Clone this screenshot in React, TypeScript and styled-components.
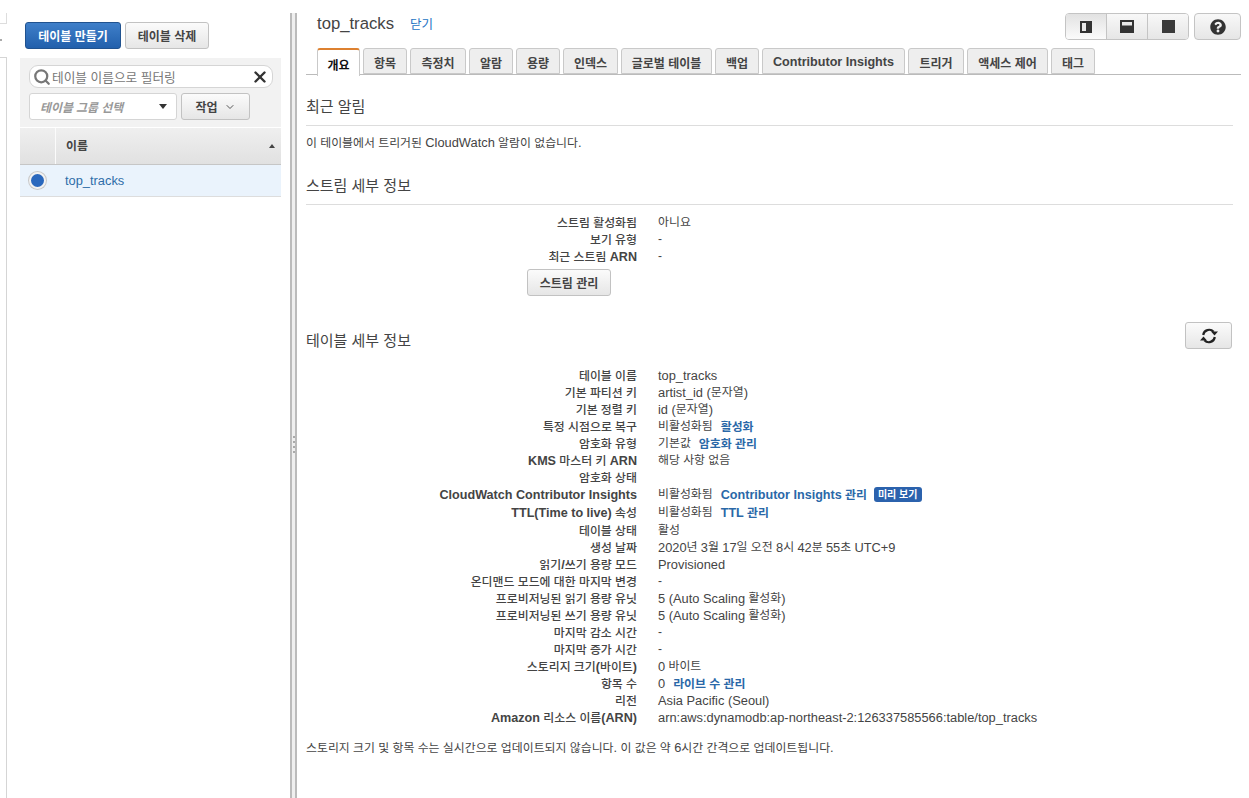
import React from "react";
import styled, { createGlobalStyle } from "styled-components";
import { ChevronDown, Search, X } from "lucide-react";
import { FaQuestionCircle } from "react-icons/fa";

const GlobalStyle = createGlobalStyle`
  html, body { margin: 0; padding: 0; background: #fff; }
  body {
    font-family: "Liberation Sans", "Noto Sans CJK KR", sans-serif;
    font-size: 11.9px;
    color: #444;
    overflow: hidden;
  }
  * { box-sizing: border-box; }
`;

const Page = styled.div`
  display: flex;
  width: 1249px;
  height: 798px;
  overflow: hidden;
`;

const Rail = styled.div`
  width: 7px;
  flex: none;
  display: flex;
  flex-direction: column;
  padding-top: 13px;
`;

const RailTop = styled.div`
  height: 11px;
  border-right: 1px solid #ddd;
  border-bottom: 1px solid #ddd;
`;

const RailDot = styled.div`
  width: 2px;
  height: 2px;
  margin-top: 15px;
  background: #aaa;
`;

const RailBottom = styled.div`
  flex: 1;
  margin-top: 16px;
  border-top: 1px solid #d5d5d5;
  border-right: 1px solid #d5d5d5;
`;

const LeftPane = styled.div`
  width: 261px;
  margin-left: 13px;
  flex: none;
`;

const ButtonBar = styled.div`
  display: flex;
  gap: 4px;
  padding: 22px 0 9px 5px;
`;

const Button = styled.button<{ $primary?: boolean; $w?: number }>`
  height: 27px;
  width: ${(p) => (p.$w ? `${p.$w}px` : "auto")};
  padding: 0;
  border-radius: 3px;
  font-family: inherit;
  font-size: 12px;
  font-weight: 700;
  display: inline-flex;
  align-items: center;
  justify-content: center;
  gap: 6px;
  color: ${(p) => (p.$primary ? "#fff" : "#444")};
  border: 1px solid ${(p) => (p.$primary ? "#20528f" : "#c2c2c2")};
  background: ${(p) =>
    p.$primary ? "linear-gradient(#3f7fc9, #2260ac)" : "linear-gradient(#fbfbfb, #e6e6e6)"};
`;

const FilterBox = styled.div`
  background: #f2f2f2;
  padding: 7px 8px 6px 9px;
  height: 69px;
`;

const SearchField = styled.div`
  height: 23px;
  width: 244px;
  display: flex;
  align-items: center;
  padding: 0 3px 0 3px;
  background: #fff;
  border: 1px solid #d5d5d5;
  border-radius: 9px;
  font-size: 12.7px;
  color: #777;
`;

const SearchText = styled.span`
  flex: 1;
  margin-left: 1px;
`;

const FilterRow = styled.div`
  display: flex;
  gap: 4px;
  margin-top: 5px;
`;

const GroupSelect = styled.div`
  width: 148px;
  height: 27px;
  display: flex;
  align-items: center;
  justify-content: space-between;
  padding: 0 9px 0 10px;
  background: #fff;
  border: 1px solid #d5d5d5;
  border-radius: 3px;
  font-style: italic;
  font-weight: 700;
  color: #999;
`;

const Caret = styled.span`
  width: 0;
  height: 0;
  border-left: 4.5px solid transparent;
  border-right: 4.5px solid transparent;
  border-top: 5px solid #333;
`;

const TableHead = styled.div`
  display: flex;
  height: 38px;
  padding-bottom: 4px;
  border-top: 1px solid #fff;
  border-bottom: 1px solid #c6c6c6;
  background: linear-gradient(#efefef, #e1e1e1);
`;

const SelectCol = styled.div`
  width: 36px;
  margin-bottom: -4px;
  border-right: 1px solid #fbfbfb;
`;

const NameCol = styled.div`
  flex: 1;
  display: flex;
  align-items: center;
  justify-content: space-between;
  padding: 0 6px 0 10px;
  font-weight: 700;
  color: #444;
`;

const SortArrow = styled.span`
  width: 0;
  height: 0;
  margin-top: 3px;
  border-left: 3.5px solid transparent;
  border-right: 3.5px solid transparent;
  border-bottom: 4px solid #444;
`;

const TableRow = styled.div`
  height: 32px;
  display: flex;
  align-items: center;
  background: #eaf3fc;
  border-bottom: 1px solid #ddd;
`;

const Radio = styled.span`
  width: 17px;
  height: 17px;
  margin: 0 19px 0 9px;
  border-radius: 50%;
  background: #2a68bd;
  border: 2px solid #f2f2f2;
  box-shadow: 0 0 0 1px #c8c8c8;
  flex: none;
`;

const TableName = styled.span`
  font-size: 12.85px;
  color: #2e6da8;
`;

const Splitter = styled.div`
  width: 7px;
  height: 785px;
  margin: 13px 0 0 9px;
  padding-top: 78px;
  flex: none;
  display: flex;
  flex-direction: column;
  align-items: center;
  justify-content: center;
  gap: 3px;
  background: #efefef;
  border-left: 2px solid #bbb;
  border-right: 2px solid #bbb;
`;

const Grip = styled.span`
  width: 2px;
  height: 2px;
  background: #aaa;
`;

const Main = styled.div`
  flex: 1;
  min-width: 0;
  padding: 0 8px 0 9px;
`;

const TitleBar = styled.div`
  height: 48px;
  display: flex;
  align-items: flex-start;
  justify-content: space-between;
  padding: 13px 0 0 11px;
`;

const TitleWrap = styled.div`
  display: flex;
  align-items: baseline;
  gap: 16px;
`;

const Title = styled.span`
  font-size: 16.7px;
  line-height: 22px;
  color: #444;
`;

const CloseLink = styled.a`
  font-size: 12.5px;
  color: #2373c4;
`;

const ToolGroup = styled.div`
  display: flex;
  gap: 5px;
`;

const Segmented = styled.div`
  display: flex;
  width: 124px;
  height: 27px;
  border: 1px solid #c4c4c4;
  border-radius: 4px;
  overflow: hidden;
`;

const Segment = styled.div<{ $active?: boolean }>`
  flex: 1;
  display: flex;
  align-items: center;
  justify-content: center;
  background: ${(p) =>
    p.$active ? "linear-gradient(#e2e2e2, #fbfbfb)" : "linear-gradient(#f8f8f8, #e6e6e6)"};
  & + & { border-left: 1px solid #c4c4c4; }
`;

const HelpButton = styled.div`
  width: 47px;
  height: 27px;
  display: flex;
  align-items: center;
  justify-content: center;
  color: #333;
  font-size: 16px;
  border: 1px solid #c4c4c4;
  border-radius: 4px;
  background: linear-gradient(#f8f8f8, #e6e6e6);
`;

const TabBar = styled.div`
  display: flex;
  gap: 3px;
  height: 27px;
  padding-left: 11px;
  border-bottom: 1px solid #bbb;
`;

const Latin = styled.span`
  font-size: 12.85px;
`;

const Tab = styled.div<{ $active?: boolean; $w: number }>`
  width: ${(p) => p.$w}px;
  height: ${(p) => (p.$active ? "28px" : "26px")};
  padding-top: 2px;
  display: flex;
  align-items: center;
  justify-content: center;
  font-weight: 700;
  font-size: 12px;
  color: ${(p) => (p.$active ? "#111" : "#444")};
  background: ${(p) => (p.$active ? "#fff" : "#eeeeee")};
  border: 1px solid #c9c9c9;
  border-bottom: ${(p) => (p.$active ? "none" : "1px solid #c9c9c9")};
  border-top: ${(p) => (p.$active ? "2px solid #dd8130" : "1px solid #c9c9c9")};
  border-radius: 3px 3px 0 0;
  ${Latin} {
    font-size: 12.6px;
  }
`;

const SectionHead = styled.div<{ $top: number }>`
  width: 927px;
  margin-top: ${(p) => p.$top}px;
  height: 33px;
  display: flex;
  align-items: flex-end;
  padding-bottom: 8px;
  line-height: 20px;
  border-bottom: 1px solid #ddd;
  font-size: 15px;
  color: #444;
`;

const PlainHead = styled.div`
  width: 926px;
  height: 27px;
  margin-top: 26px;
  display: flex;
  align-items: center;
  justify-content: space-between;
  font-size: 15px;
  color: #444;
`;

const PlainHeadLabel = styled.span`
  margin-top: 8px;
`;

const BodyText = styled.div<{ $top: number }>`
  margin-top: ${(p) => p.$top}px;
  line-height: 17px;
  color: #444;
`;

const DetailList = styled.div<{ $top: number }>`
  margin-top: ${(p) => p.$top}px;
`;

const DetailRow = styled.div<{ $tall?: boolean }>`
  display: flex;
  height: ${(p) => (p.$tall ? "18px" : "17px")};
  line-height: 17px;
`;

const Label = styled.div`
  width: 331px;
  flex: none;
  padding-top: 1px;
  text-align: right;
  font-weight: 500;
  color: #444;
  ${Latin} {
    font-size: 12.6px;
    font-weight: 700;
  }
`;

const Value = styled.div`
  margin-left: 21px;
  display: flex;
  align-items: flex-start;
  white-space: pre;
  color: #444;
`;

const ActionLink = styled.a<{ $gap?: number }>`
  margin-left: ${(p) => p.$gap ?? 8}px;
  margin-top: 1px;
  font-weight: 700;
  color: #2a68a8;
  ${Latin} {
    font-size: 12.6px;
  }
`;

const Badge = styled.span`
  margin: 1px 0 0 7px;
  height: 15px;
  padding: 0 4px;
  display: inline-flex;
  align-items: center;
  border-radius: 3px;
  background: #2b62ad;
  color: #fff;
  font-size: 10px;
  font-weight: 700;
`;

const ManageWrap = styled.div`
  margin: 4px 0 0 221px;
`;

const RefreshButton = styled(Button)`
  width: 47px;
  color: #333;
`;

// latin runs are set a little larger than the hangul around them
const mix = (text: string) =>
  text.split(/([\x21-\x7e]+(?: [\x21-\x7e]+)*)/).map((part, i) =>
    i % 2 ? <Latin key={i}>{part}</Latin> : part
  );

const PaneLeft = () => (
  <svg width="12" height="12" viewBox="0 0 12 12">
    <rect width="12" height="12" fill="#333" />
    <rect x="2" y="2" width="4" height="8" fill="#e8e8e8" />
  </svg>
);

const PaneBottom = () => (
  <svg width="14" height="13" viewBox="0 0 14 13">
    <rect width="14" height="13" fill="#333" />
    <rect x="2" y="2" width="10" height="3.5" fill="#e8e8e8" />
  </svg>
);

const PaneFull = () => (
  <svg width="13" height="13" viewBox="0 0 13 13">
    <rect width="13" height="13" fill="#3a3a3a" />
  </svg>
);

const RefreshIcon = () => (
  <svg width="18" height="16" viewBox="0 0 18 16" fill="none">
    <path d="M3.2 7A6 6 0 0 1 13.6 3.8" stroke="#222" strokeWidth="2.2" />
    <path d="M14.8 9A6 6 0 0 1 4.4 12.2" stroke="#222" strokeWidth="2.2" />
    <path d="M11 6.6h7L14.5 2.6z" fill="#222" transform="rotate(180 14.5 5.6) translate(0 1)" />
    <path d="M0 9.4h7L3.5 13.4z" fill="#222" transform="rotate(180 3.5 10.4) translate(0 -1)" />
  </svg>
);

const tabs: [string, number][] = [
  ["개요", 43],
  ["항목", 44],
  ["측정치", 56],
  ["알람", 44],
  ["용량", 44],
  ["인덱스", 55],
  ["글로벌 테이블", 91],
  ["백업", 44],
  ["Contributor Insights", 143],
  ["트리거", 56],
  ["액세스 제어", 81],
  ["태그", 44],
];

const details: [string, React.ReactNode, boolean?][] = [
  ["테이블 이름", mix("top_tracks")],
  ["기본 파티션 키", mix("artist_id (문자열)")],
  ["기본 정렬 키", mix("id (문자열)")],
  ["특정 시점으로 복구", <>비활성화됨<ActionLink>활성화</ActionLink></>],
  ["암호화 유형", <>기본값<ActionLink>암호화 관리</ActionLink></>],
  ["KMS 마스터 키 ARN", "해당 사항 없음"],
  ["암호화 상태", null],
  [
    "CloudWatch Contributor Insights",
    <>비활성화됨<ActionLink>{mix("Contributor Insights 관리")}</ActionLink><Badge>미리 보기</Badge></>,
    true,
  ],
  ["TTL(Time to live) 속성", <>비활성화됨<ActionLink>{mix("TTL 관리")}</ActionLink></>, true],
  ["테이블 상태", "활성"],
  ["생성 날짜", mix("2020년 3월 17일 오전 8시 42분 55초 UTC+9")],
  ["읽기/쓰기 용량 모드", mix("Provisioned")],
  ["온디맨드 모드에 대한 마지막 변경", "-"],
  ["프로비저닝된 읽기 용량 유닛", mix("5 (Auto Scaling 활성화)")],
  ["프로비저닝된 쓰기 용량 유닛", mix("5 (Auto Scaling 활성화)")],
  ["마지막 감소 시간", "-"],
  ["마지막 증가 시간", "-"],
  ["스토리지 크기(바이트)", mix("0 바이트")],
  ["항목 수", <>{mix("0")}<ActionLink>라이브 수 관리</ActionLink></>],
  ["리전", mix("Asia Pacific (Seoul)")],
  ["Amazon 리소스 이름(ARN)", mix("arn:aws:dynamodb:ap-northeast-2:126337585566:table/top_tracks")],
];

export default function App() {
  return (
    <Page>
      <GlobalStyle />
      <Rail>
        <RailTop />
        <RailDot />
        <RailBottom />
      </Rail>

      <LeftPane>
        <ButtonBar>
          <Button $primary $w={96}>테이블 만들기</Button>
          <Button $w={84}>테이블 삭제</Button>
        </ButtonBar>
        <FilterBox>
          <SearchField>
            <Search size={18} color="#777" strokeWidth={3} />
            <SearchText>테이블 이름으로 필터링</SearchText>
            <X size={18} color="#333" strokeWidth={3.2} />
          </SearchField>
          <FilterRow>
            <GroupSelect>
              테이블 그룹 선택
              <Caret />
            </GroupSelect>
            <Button $w={69}>
              작업
              <ChevronDown size={12} color="#555" />
            </Button>
          </FilterRow>
        </FilterBox>
        <TableHead>
          <SelectCol />
          <NameCol>
            이름
            <SortArrow />
          </NameCol>
        </TableHead>
        <TableRow>
          <Radio />
          <TableName>top_tracks</TableName>
        </TableRow>
      </LeftPane>

      <Splitter>
        <Grip />
        <Grip />
        <Grip />
        <Grip />
      </Splitter>

      <Main>
        <TitleBar>
          <TitleWrap>
            <Title>top_tracks</Title>
            <CloseLink>닫기</CloseLink>
          </TitleWrap>
          <ToolGroup>
            <Segmented>
              <Segment $active><PaneLeft /></Segment>
              <Segment><PaneBottom /></Segment>
              <Segment><PaneFull /></Segment>
            </Segmented>
            <HelpButton><FaQuestionCircle /></HelpButton>
          </ToolGroup>
        </TitleBar>

        <TabBar>
          {tabs.map(([name, w], i) => (
            <Tab key={name} $w={w} $active={i === 0}>{mix(name)}</Tab>
          ))}
        </TabBar>

        <SectionHead $top={18}>최근 알림</SectionHead>
        <BodyText $top={8}>{mix("이 테이블에서 트리거된 CloudWatch 알람이 없습니다.")}</BodyText>

        <SectionHead $top={20}>스트림 세부 정보</SectionHead>
        <DetailList $top={9}>
          <DetailRow><Label>스트림 활성화됨</Label><Value>아니요</Value></DetailRow>
          <DetailRow><Label>보기 유형</Label><Value>-</Value></DetailRow>
          <DetailRow><Label>{mix("최근 스트림 ARN")}</Label><Value>-</Value></DetailRow>
        </DetailList>
        <ManageWrap>
          <Button $w={84}>스트림 관리</Button>
        </ManageWrap>

        <PlainHead>
          <PlainHeadLabel>테이블 세부 정보</PlainHeadLabel>
          <RefreshButton><RefreshIcon /></RefreshButton>
        </PlainHead>

        <DetailList $top={18}>
          {details.map(([label, value, tall]) => (
            <DetailRow key={label} $tall={tall}>
              <Label>{mix(label)}</Label>
              <Value>{value}</Value>
            </DetailRow>
          ))}
        </DetailList>

        <BodyText $top={13}>
          {mix("스토리지 크기 및 항목 수는 실시간으로 업데이트되지 않습니다. 이 값은 약 6시간 간격으로 업데이트됩니다.")}
        </BodyText>
      </Main>
    </Page>
  );
}
